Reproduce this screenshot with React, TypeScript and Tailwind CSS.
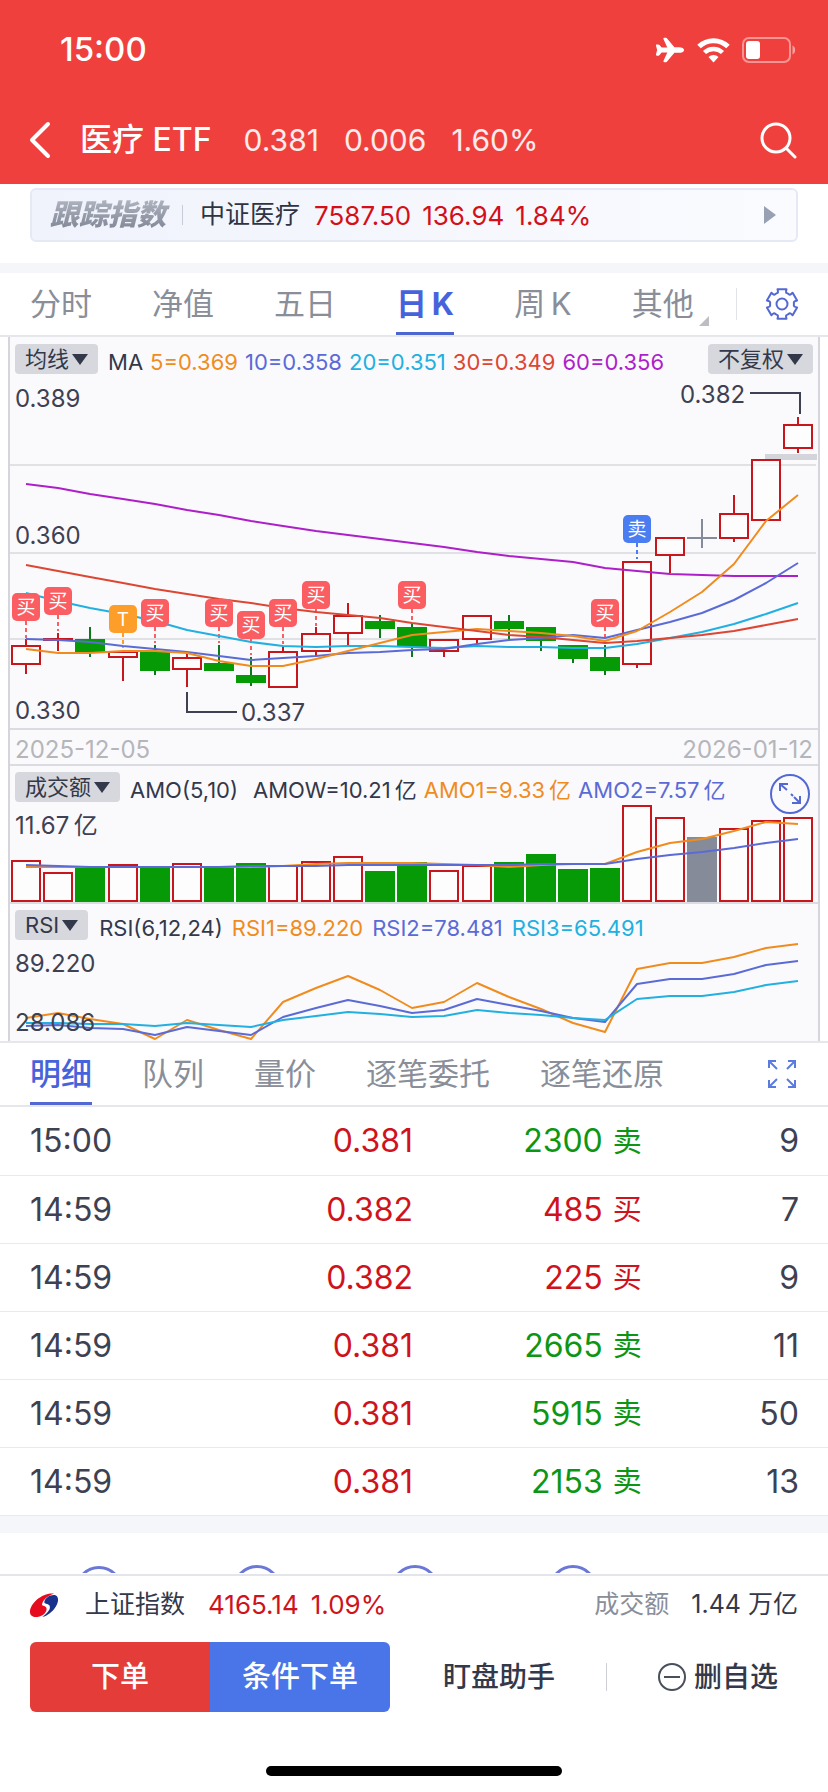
import React, { useState } from "react";
import { IoAirplane } from "react-icons/io5";

const CHART_WIDTH = 808;
const RED = "#c8161d";
const GREEN = "#079a07";
const GRAY = "#868b99";
const ORANGE = "#f08c1e";
const INDIGO = "#5b6bd6";
const CYAN = "#22b0e0";
const BRICK = "#dc4632";
const PURPLE = "#ad1fc9";
const INK = "#3d4152";

type Kind = "up" | "down";

interface Candle {
  kind: Kind;
  top: number;
  bottom: number;
  high: number;
  low: number;
}

const candles: (Candle | null)[] = [
  { kind: "up", top: 308, bottom: 328, high: 302, low: 337 },
  { kind: "up", top: 301, bottom: 304, high: 296, low: 314 },
  { kind: "down", top: 302, bottom: 315, high: 290, low: 320 },
  { kind: "up", top: 314, bottom: 321, high: 314, low: 344 },
  { kind: "down", top: 314, bottom: 334, high: 308, low: 338 },
  { kind: "up", top: 320, bottom: 333, high: 316, low: 350 },
  { kind: "down", top: 326, bottom: 334, high: 308, low: 334 },
  { kind: "down", top: 338, bottom: 346, high: 320, low: 349 },
  { kind: "up", top: 314, bottom: 351, high: 309, low: 351 },
  { kind: "up", top: 296, bottom: 315, high: 290, low: 319 },
  { kind: "up", top: 278, bottom: 297, high: 266, low: 308 },
  { kind: "down", top: 284, bottom: 292, high: 278, low: 301 },
  { kind: "down", top: 290, bottom: 310, high: 287, low: 320 },
  { kind: "up", top: 302, bottom: 315, high: 302, low: 320 },
  { kind: "up", top: 278, bottom: 303, high: 278, low: 307 },
  { kind: "down", top: 284, bottom: 292, high: 278, low: 302 },
  { kind: "down", top: 290, bottom: 304, high: 290, low: 314 },
  { kind: "down", top: 308, bottom: 322, high: 308, low: 326 },
  { kind: "down", top: 320, bottom: 334, high: 308, low: 338 },
  { kind: "up", top: 224, bottom: 328, high: 224, low: 331 },
  { kind: "up", top: 200, bottom: 219, high: 200, low: 236 },
  null,
  { kind: "up", top: 176, bottom: 202, high: 158, low: 205 },
  { kind: "up", top: 122, bottom: 184, high: 122, low: 184 },
  { kind: "up", top: 87, bottom: 112, high: 80, low: 116 },
];

const averages = [
  {
    color: PURPLE,
    points: [147, 151, 157, 162, 167, 173, 178, 184, 189, 194, 198, 202, 206, 210, 215, 219, 222, 225, 231, 234, 237, 238, 239, 239, 239],
  },
  {
    color: CYAN,
    points: [256, 264, 271, 277, 284, 293, 299, 305, 309, 310, 309, 309, 310, 311, 309, 310, 310, 311, 311, 307, 301, 295, 287, 277, 266],
  },
  {
    color: INDIGO,
    points: [302, 303, 305, 309, 312, 315, 319, 323, 321, 319, 316, 315, 313, 312, 307, 303, 301, 298, 301, 293, 285, 276, 263, 246, 226],
  },
  {
    color: ORANGE,
    points: [312, 316, 316, 314, 314, 316, 324, 329, 329, 322, 314, 306, 298, 295, 292, 294, 296, 299, 304, 294, 275, 255, 227, 184, 158],
  },
  {
    color: BRICK,
    points: [228, 234, 240, 246, 252, 257, 262, 266, 271, 275, 278, 281, 286, 290, 294, 298, 300, 303, 306, 304, 301, 298, 294, 288, 282],
  },
];

const badges = [
  { index: 0, y: 256, end: 301, text: "买", color: "#fa5e62" },
  { index: 1, y: 250, end: 294, text: "买", color: "#fa5e62" },
  { index: 3, y: 268, end: 311, text: "T", color: "#fd9e2b" },
  { index: 4, y: 262, end: 306, text: "买", color: "#fa5e62" },
  { index: 6, y: 262, end: 306, text: "买", color: "#fa5e62" },
  { index: 7, y: 274, end: 318, text: "买", color: "#fa5e62" },
  { index: 8, y: 262, end: 307, text: "买", color: "#fa5e62" },
  { index: 9, y: 244, end: 289, text: "买", color: "#fa5e62" },
  { index: 12, y: 244, end: 286, text: "买", color: "#fa5e62" },
  { index: 18, y: 262, end: 307, text: "买", color: "#fa5e62" },
  { index: 19, y: 178, end: 222, text: "卖", color: "#4a7df2" },
];

const volumes = [
  [94, "up"], [106, "up"], [101, "down"], [98, "up"], [100, "down"],
  [97, "up"], [101, "down"], [97, "down"], [99, "up"], [95, "up"],
  [90, "up"], [105, "down"], [96, "down"], [104, "up"], [99, "up"],
  [96, "down"], [88, "down"], [103, "down"], [102, "down"], [39, "up"],
  [51, "up"], [71, "flat"], [62, "up"], [54, "up"], [51, "up"],
] as [number, string][];

const volumeLines = [
  {
    color: ORANGE,
    points: [101, 101, 101, 101, 101, 101, 101, 101, 100, 98, 97, 97, 97, 98, 99, 101, 99, 98, 98, 86, 77, 73, 65, 56, 58],
  },
  {
    color: INDIGO,
    points: [99, 100, 101, 101, 101, 101, 101, 100, 100, 100, 99, 99, 99, 99, 99, 99, 98, 98, 98, 93, 89, 86, 82, 77, 73],
  },
];

const rsiLines = [
  {
    color: ORANGE,
    points: [114, 109, 115, 120, 135, 116, 126, 135, 98, 84, 72, 86, 104, 98, 79, 93, 105, 119, 128, 65, 59, 59, 53, 44, 40],
  },
  {
    color: INDIGO,
    points: [122, 121, 124, 125, 131, 123, 127, 131, 113, 104, 96, 102, 109, 106, 95, 101, 107, 114, 118, 80, 75, 75, 70, 61, 57],
  },
  {
    color: CYAN,
    points: [119, 119, 120, 120, 122, 119, 121, 123, 116, 112, 108, 110, 113, 112, 106, 109, 111, 114, 116, 95, 92, 92, 88, 81, 77],
  },
];

const trades = [
  { time: "15:00", price: "0.381", qty: "2300", side: "卖", count: 9 },
  { time: "14:59", price: "0.382", qty: "485", side: "买", count: 7 },
  { time: "14:59", price: "0.382", qty: "225", side: "买", count: 9 },
  { time: "14:59", price: "0.381", qty: "2665", side: "卖", count: 11 },
  { time: "14:59", price: "0.381", qty: "5915", side: "卖", count: 50 },
  { time: "14:59", price: "0.381", qty: "2153", side: "卖", count: 13 },
];

// thin spaces between Chinese and latin characters
const periods = ["分时", "净值", "五日", "日\u2009K", "周\u2009K", "其他"];
const detailTabs = ["明细", "队列", "量价", "逐笔委托", "逐笔还原"];

const xAt = (i: number) => Math.round(16 + i * 32.18);

const Line: React.FC<{ color: string; points: number[] }> = ({ color, points }) => (
  <polyline
    fill="none"
    stroke={color}
    strokeWidth="2"
    strokeLinejoin="round"
    points={points.map((y, i) => `${xAt(i)},${y}`).join(" ")}
  />
);

const StatusBar: React.FC = () => (
  <div className="flex h-[100px] items-center justify-between pl-[60px] pr-8">
    <span className="text-[33px] font-medium">15:00</span>
    <div className="flex items-center gap-3">
      <IoAirplane className="size-[30px]" />
      <svg className="h-[25px] w-[33px]" viewBox="0 0 33 25" fill="none" stroke="currentColor">
        <path d="M2 8.500a21 21 0 0 1 29 0" strokeWidth="5" />
        <path d="M7.500 14.500a13 13 0 0 1 18 0" strokeWidth="4.500" />
        <path d="M11.500 19a7.500 7.500 0 0 1 10 0l-5 5.500z" fill="currentColor" stroke="none" />
      </svg>
      <svg className="h-[26px] w-[54px]" viewBox="0 0 54 26" fill="none">
        <rect x="1" y="1" width="47" height="24" rx="6" stroke="#fff" strokeOpacity="0.45" strokeWidth="2" />
        <rect x="4" y="4" width="14" height="18" rx="3" fill="#fff" />
        <path d="M50.500 8.500c3.500 1 3.500 8 0 9z" fill="#fff" fillOpacity="0.5" />
      </svg>
    </div>
  </div>
);

const TitleBar: React.FC = () => (
  <div className="flex h-[84px] items-center pb-1 pl-[29px] pr-[31px]">
    <button aria-label="返回">
      <svg className="h-[38px] w-[22px]" viewBox="0 0 22 38" fill="none" stroke="currentColor" strokeWidth="4" strokeLinecap="round" strokeLinejoin="round">
        <path d="M19 3L3 19l16 16" />
      </svg>
    </button>
    <h1 className="ml-[29px] text-[32px] font-medium">医疗 ETF</h1>
    <div className="ml-8 flex gap-[25px] text-[30px] text-white/90">
      <span>0.381</span>
      <span>0.006</span>
      <span>1.60%</span>
    </div>
    <button aria-label="搜索" className="ml-auto">
      <svg className="size-[38px]" viewBox="0 0 38 38" fill="none" stroke="currentColor" strokeWidth="3" strokeLinecap="round">
        <circle cx="17" cy="17" r="14" />
        <path d="M27 27l9 9" />
      </svg>
    </button>
  </div>
);

const IndexCard: React.FC = () => (
  <div className="px-[30px] pb-[21px] pt-1">
    <a
      href="#index"
      className="flex h-[54px] items-center rounded-md border-2 border-[#e6e9f5] bg-linear-to-r from-[#f0f3fc] to-[#fafbff] pl-[18px] pr-5"
    >
      <span className="bg-linear-to-b from-[#b9bdc8] to-[#777d8e] bg-clip-text pr-1 text-[29px] font-black italic text-transparent">
        跟踪指数
      </span>
      <span className="ml-3 h-5 w-px bg-[#c9ccd8]" />
      <span className="ml-[17px] text-[25px] text-[#2f3443]">中证医疗</span>
      <span className="ml-[14px] flex gap-[11px] text-[26px] text-[#d40f19]">
        <span>7587.50</span>
        <span>136.94</span>
        <span>1.84%</span>
      </span>
      <svg className="ml-auto h-[18px] w-3" viewBox="0 0 12 18">
        <path d="M0 0l12 9-12 9z" fill="#98a0b3" />
      </svg>
    </a>
  </div>
);

const GearIcon: React.FC = () => {
  const at = (r: number, deg: number) => {
    const a = ((deg - 90) * Math.PI) / 180;
    return `${(17 + r * Math.cos(a)).toFixed(1)} ${(17 + r * Math.sin(a)).toFixed(1)}`;
  };
  const teeth = [0, 60, 120, 180, 240, 300].map(
    (d) => `L${at(15.5, d - 17)} L${at(15.5, d + 17)} Q${at(11.5, d + 17)} ${at(12, d + 24)} L${at(12, d + 36)} Q${at(11.5, d + 43)} ${at(15.5, d + 43)}`
  );
  return (
    <svg className="size-[34px]" viewBox="0 0 34 34" fill="none" stroke="#5468d4" strokeWidth="2" strokeLinejoin="round">
      <path d={`M${at(15.5, -17)} ${teeth.join(" ")}Z`} />
      <circle cx="17" cy="17" r="5.5" />
    </svg>
  );
};

const PeriodTabs: React.FC = () => {
  const [active, setActive] = useState(periods[3]);
  return (
    <nav className="flex h-16 items-stretch border-b-2 border-[#e6e7ea] pl-[30px] pr-[29px]">
      <div className="flex gap-[60px] text-[31px]">
        {periods.map((p) => (
          <button
            key={p}
            onClick={() => setActive(p)}
            className={
              p === active
                ? "relative border-b-[3px] border-[#4c66d0] pt-[3px] font-bold text-[#4763dc]"
                : "relative border-b-[3px] border-transparent pt-[3px] text-[#898e99]"
            }
          >
            {p}
            {p === "其他" && (
              <svg className="absolute -right-[15px] bottom-[6px] size-[10px]" viewBox="0 0 10 10">
                <path d="M10 0v10H0z" fill="#bcbec4" />
              </svg>
            )}
          </button>
        ))}
      </div>
      <div className="ml-auto flex items-center gap-7">
        <span className="h-8 w-px bg-[#e2e4e9]" />
        <button aria-label="设置">
          <GearIcon />
        </button>
      </div>
    </nav>
  );
};

const DropButton: React.FC<{ label: string }> = ({ label }) => (
  <button className="flex h-[30px] shrink-0 items-center gap-[3px] rounded bg-[#d6d8de] px-[10px] text-[22px] leading-none text-[#33384a]">
    {label}
    <svg className="h-[11px] w-4" viewBox="0 0 16 11">
      <path d="M0 0h16l-8 11z" fill="#33384a" />
    </svg>
  </button>
);

const PriceChart: React.FC = () => (
  <div className="relative border-b-2 border-[#dadce1]">
    <svg className="block h-auto w-full" viewBox={`0 0 ${CHART_WIDTH} 391`}>
      {[128, 216, 302].map((y) => (
        <path key={y} d={`M0 ${y}H${CHART_WIDTH - 2}`} stroke="#e0e1e5" strokeWidth="2" />
      ))}
      <rect x="755" y="117" width="52" height="6" fill="#d3d5da" />
      {badges.map((b) => (
        <path
          key={b.index}
          d={`M${xAt(b.index)} ${b.y + 28}V${b.end}`}
          stroke={b.color}
          strokeWidth="2"
          strokeDasharray="4 3"
        />
      ))}
      {candles.map((c, i) => {
        const x = xAt(i);
        if (!c) {
          return <path key={i} d={`M${x - 15} 201h30M${x} 182v29`} stroke={GRAY} strokeWidth="2" />;
        }
        if (c.kind === "down") {
          return (
            <g key={i}>
              <path d={`M${x} ${c.high}V${c.low}`} stroke="#0c7a1c" strokeWidth="2" />
              <rect x={x - 15} y={c.top} width="30" height={c.bottom - c.top} fill={GREEN} />
            </g>
          );
        }
        return (
          <g key={i} stroke={RED} strokeWidth="2">
            <path d={`M${x} ${c.high}V${c.top}M${x} ${c.bottom}V${c.low}`} />
            <rect x={x - 14} y={c.top + 1} width="28" height={c.bottom - c.top - 2} fill="#fff" fillOpacity="0.6" />
          </g>
        );
      })}
      {averages.map((a) => (
        <Line key={a.color} {...a} />
      ))}
      {badges.map((b) => (
        <g key={b.index}>
          <rect x={xAt(b.index) - 14} y={b.y} width="28" height="28" rx="5" fill={b.color} />
          <text x={xAt(b.index)} y={b.y + 21} fill="#fff" fontSize="19" textAnchor="middle">
            {b.text}
          </text>
        </g>
      ))}
      <path d="M177 355v20h50M740 56h50v21" fill="none" stroke={INK} strokeWidth="2" />
      <g fill={INK} fontSize="24">
        <text x="5" y="70">0.389</text>
        <text x="5" y="207">0.360</text>
        <text x="5" y="382">0.330</text>
        <text x="231" y="384">0.337</text>
        <text x="670" y="66">0.382</text>
      </g>
    </svg>
    <div className="absolute inset-x-[5px] top-[7px] flex justify-between text-[22px]">
      <DropButton label="均线" />
      <div className="ml-[10px] flex h-9 flex-1 items-center gap-[7px]">
        <span>MA</span>
        <span className="text-[#f08c1e]">5=0.369</span>
        <span className="text-[#5b6bd6]">10=0.358</span>
        <span className="text-[#22b0e0]">20=0.351</span>
        <span className="text-[#dc4632]">30=0.349</span>
        <span className="text-[#ad1fc9]">60=0.356</span>
      </div>
      <DropButton label="不复权" />
    </div>
  </div>
);

const VolumeChart: React.FC = () => (
  <div className="relative border-b-2 border-[#dadce1]">
    <svg className="block h-auto w-full" viewBox={`0 0 ${CHART_WIDTH} 136`}>
      {volumes.map(([top, kind], i) =>
        kind === "up" ? (
          <rect key={i} x={xAt(i) - 14} y={top + 1} width="28" height={134 - top} fill="#fff" fillOpacity="0.6" stroke={RED} strokeWidth="2" />
        ) : (
          <rect key={i} x={xAt(i) - 15} y={top} width="30" height={136 - top} fill={kind === "down" ? GREEN : GRAY} />
        )
      )}
      {volumeLines.map((l) => (
        <Line key={l.color} {...l} />
      ))}
      <text x="5" y="68" fill={INK} fontSize="24">{"11.67\u2009亿"}</text>
    </svg>
    <div className="absolute inset-x-[5px] top-[6px] flex text-[22px]">
      <DropButton label="成交额" />
      <div className="ml-[10px] flex h-9 items-center gap-[7px]">
        <span>AMO(5,10)</span>
        <span className="ml-2">{"AMOW=10.21\u2009亿"}</span>
        <span className="text-[#f08c1e]">{"AMO1=9.33\u2009亿"}</span>
        <span className="text-[#5b6bd6]">{"AMO2=7.57\u2009亿"}</span>
      </div>
      <button aria-label="放大" className="ml-auto mr-[3px] mt-[2px] size-10">
        <svg viewBox="0 0 40 40" fill="none" stroke="#5468d4" strokeWidth="2">
          <circle cx="20" cy="20" r="19" />
          <path d="M10 17v-7h8M10 10l7 6M21 20l2 2M24 23l6 6M30 22v7h-8" />
        </svg>
      </button>
    </div>
  </div>
);

const RsiChart: React.FC = () => (
  <div className="relative">
    <svg className="block h-auto w-full" viewBox={`0 0 ${CHART_WIDTH} 137`}>
      {rsiLines.map((l) => (
        <Line key={l.color} {...l} />
      ))}
      <g fill={INK} fontSize="24">
        <text x="5" y="68">89.220</text>
        <text x="5" y="127">28.086</text>
      </g>
    </svg>
    <div className="absolute inset-x-[5px] top-[6px] flex text-[22px]">
      <DropButton label="RSI" />
      <div className="ml-[11px] flex h-9 items-center gap-[9px]">
        <span>RSI(6,12,24)</span>
        <span className="text-[#f08c1e]">RSI1=89.220</span>
        <span className="text-[#5b6bd6]">RSI2=78.481</span>
        <span className="text-[#22b0e0]">RSI3=65.491</span>
      </div>
    </div>
  </div>
);

const DetailTabs: React.FC = () => {
  const [active, setActive] = useState("明细");
  return (
    <nav className="flex h-[66px] items-stretch border-y-2 border-[#e6e7ea] pl-[30px] pr-8">
      <div className="flex gap-[50px] text-[31px]">
        {detailTabs.map((t) => (
          <button
            key={t}
            onClick={() => setActive(t)}
            className={
              t === active
                ? "border-b-[3px] border-[#5468d4] pt-[3px] font-medium text-[#4763dc]"
                : "border-b-[3px] border-transparent pt-[3px] text-[#898e99]"
            }
          >
            {t}
          </button>
        ))}
      </div>
      <button aria-label="全屏" className="ml-auto">
        <svg className="size-7" viewBox="0 0 28 28" fill="none" stroke="#5b7be0" strokeWidth="2">
          <path d="M1 8V1h7M1 1l8 8M20 1h7v7M27 1l-8 8M1 20v7h7M1 27l8-8M27 20v7h-7M27 27l-8-8" />
        </svg>
      </button>
    </nav>
  );
};

const TradeTable: React.FC = () => (
  <table className="w-full table-fixed text-[32px] leading-none text-[#3d4152]">
    <tbody>
      {trades.map((t, i) => (
        <tr key={i} className="h-[68px] border-b border-[#e9eaee]">
          <td className="w-[30%] pl-[30px] pt-px">{t.time}</td>
          <td className="w-[20%] pr-px pt-px text-right text-[#cf131c]">{t.price}</td>
          <td className={t.side === "卖" ? "w-[28%] pr-1 pt-px text-[#0d9614]" : "w-[28%] pr-1 pt-px text-[#cf131c]"}>
            <div className="flex items-center justify-end gap-[10px]">
              {t.qty}
              <span className="text-[29px]">{t.side}</span>
            </div>
          </td>
          <td className="pr-[29px] pt-px text-right">{t.count}</td>
        </tr>
      ))}
    </tbody>
  </table>
);

// only the tops of the icons show above the footer
const ShortcutRow: React.FC = () => (
  <div className="h-10 overflow-hidden pl-[75px] pt-8">
    <div className="flex gap-[110px]">
      <span className="mt-px size-12 rounded-full border-[3px] border-[#6b78d8]" />
      <span className="size-12 rounded-full border-[3px] border-[#6b78d8]" />
      <span className="size-12 rounded-full border-[3px] border-[#6b78d8]" />
      <span className="size-12 rounded-full border-[3px] border-[#6b78d8]" />
    </div>
  </div>
);

const Footer: React.FC = () => (
  <footer className="border-t-2 border-[#e4e5e8] bg-white">
    <div className="flex h-14 items-center px-[30px] pt-px text-[25px]">
      <svg className="h-6 w-7" viewBox="0 0 84 72">
        <path d="M72 2C40-3 0 30 0 57c0 13 12 17 26 14 18-4 28-20 22-28-4-5-12-3-12-9 2-12 16-26 36-32z" fill="#e60c1e" />
        <path d="M74 6c11 2 14 16 4 34-10 17-26 29-41 32 16-11 27-25 21-35-5-7-16-3-15-11C46 13 62 4 74 6z" fill="#17318c" />
      </svg>
      <span className="ml-[27px]">上证指数</span>
      <span className="ml-[23px] flex gap-3 text-[26px] text-[#cf131c]">
        <span>4165.14</span>
        <span>1.09%</span>
      </span>
      <span className="ml-auto text-[#898e99]">成交额</span>
      <span className="ml-[22px]">1.44 万亿</span>
    </div>
    <div className="mt-[10px] flex h-[70px] px-[30px] text-[28px] font-medium">
      <div className="flex w-[360px] overflow-hidden rounded-md text-[29px] text-white">
        <button className="flex-1 bg-[#e43c39]">下单</button>
        <button className="flex-1 bg-[#4975e8]">条件下单</button>
      </div>
      <div className="flex flex-1 items-center justify-between pl-[53px] pr-5">
        <button>盯盘助手</button>
        <span className="h-7 w-px bg-[#cfd1d6]" />
        <button className="flex items-center gap-2">
          <svg className="size-7" viewBox="0 0 28 28" fill="none" stroke="#4a4f5e" strokeWidth="2">
            <circle cx="14" cy="14" r="13" />
            <path d="M6 14h16" />
          </svg>
          删自选
        </button>
      </div>
    </div>
    <div className="mx-auto mb-4 mt-[54px] h-[10px] w-[296px] rounded-full bg-black" />
  </footer>
);

const App: React.FC = () => {
  return (
    <div className="flex min-h-screen flex-col bg-white text-[#33384a] [font-family:Inter,'Noto_Sans_CJK_SC',sans-serif]">
      <header className="bg-[#ef403d] text-white">
        <StatusBar />
        <TitleBar />
      </header>
      <main className="flex-1">
        <IndexCard />
        <div className="h-[10px] bg-[#f5f6f9]" />
        <PeriodTabs />
        <section className="mx-2 border-x-2 border-[#d4d6db] bg-[#fafafd]">
          <PriceChart />
          <div className="flex h-9 items-center justify-between border-b-2 border-[#dadce1] px-[5px] pt-[6px] text-[24px] leading-none text-[#b5b6ba]">
            <span>2025-12-05</span>
            <span>2026-01-12</span>
          </div>
          <VolumeChart />
          <RsiChart />
        </section>
        <DetailTabs />
        <TradeTable />
        <div className="h-[17px] bg-[#f5f6fa]" />
        <ShortcutRow />
      </main>
      <Footer />
    </div>
  );
};

export default App;
